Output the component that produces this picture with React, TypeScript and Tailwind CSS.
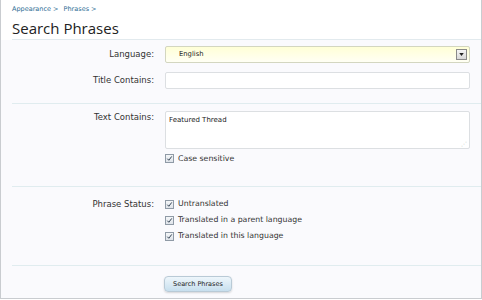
const Check = () => (
    <span className="inline-flex items-center justify-center w-[9px] h-[9px] border border-[#8f9aa6] bg-gradient-to-b from-[#f4f6f8] to-[#dfe4ea] mr-[4px] shrink-0">
        <svg viewBox="0 0 8 8" className="w-[7px] h-[7px]">
            <path d="M1.5 4.2 L3.2 6 L6.6 1.6" fill="none" stroke="#2d3c4e" strokeWidth="1.1" />
        </svg>
    </span>
);

const Row = ({ label, children, className = "" }: { label: string; children: React.ReactNode; className?: string }) => (
    <div className={"flex " + className}>
        <div className="w-[155px] shrink-0 text-right pr-[2px] text-[#333] text-[8.5px]">{label}</div>
        <div className="ml-[9px] w-[305px]">{children}</div>
    </div>
);

const App = () => {
    return (
        <div className="w-[482px] h-[300px] bg-white font-['DejaVu_Sans',sans-serif]">
            <div className="w-[482px] h-[299px] border-l border-r border-b border-[#c9ccd0] bg-[#fafafd]">
                <div className="h-[40px] bg-white">
                    <div className="ml-[11px] h-[40px] pt-[4px] border-b border-[#e2eaee]">
                        <div className="text-[6.5px] text-[#2b6b93] leading-[10px] flex gap-[5px]">
                            <span>Appearance &gt;</span>
                            <span>Phrases &gt;</span>
                        </div>
                        <h1 className="text-[15px] leading-[22px] mt-[3px] text-[#222] font-['Open_Sans',sans-serif]">Search Phrases</h1>
                    </div>
                </div>

                <div className="ml-[11px] border-b border-[#e0ecef] h-[64px] pt-[6px]">
                    <Row label="Language:" className="items-center -ml-[11px]">
                        <div className="h-[17px] border border-[#d3d6c0] rounded-[2px] bg-gradient-to-b from-[#ffffd6] to-[#fffff4] flex items-center justify-between pl-[13px] pr-[2px]">
                            <span className="text-[6.8px] text-[#222]">English</span>
                            <span className="w-[11px] h-[11px] border border-[#8a8a8a] bg-gradient-to-b from-[#f5f5f5] to-[#d8d8d8] flex items-center justify-center">
                                <svg viewBox="0 0 6 4" className="w-[5px] h-[3px]"><path d="M0 0 H6 L3 4 Z" fill="#222" /></svg>
                            </span>
                        </div>
                    </Row>
                    <Row label="Title Contains:" className="items-center mt-[9px] -ml-[11px]">
                        <div className="h-[17px] border border-[#dcdfe2] rounded-[2px] bg-white" />
                    </Row>
                </div>

                <div className="ml-[11px] border-b border-[#e0ecef] h-[83px] pt-[7px]">
                    <Row label="Text Contains:" className="-ml-[11px]">
                        <div className="h-[38px] border border-[#dcdfe2] rounded-[2px] bg-white relative px-[3px] pt-[3px] text-[7px] text-[#222]">
                            Featured Thread
                            <span className="absolute right-[2px] bottom-[1px] text-[6px] text-[#bbb] leading-none">⋰</span>
                        </div>
                        <div className="flex items-center mt-[4px] text-[7.8px] text-[#333]">
                            <Check />Case sensitive
                        </div>
                    </Row>
                </div>

                <div className="ml-[11px] border-b border-[#e0ecef] h-[79px] pt-[11px]">
                    <Row label="Phrase Status:" className="-ml-[11px]">
                        <div className="flex flex-col gap-[4px] text-[7.8px] text-[#333] leading-[12px]">
                            <div className="flex items-center"><Check />Untranslated</div>
                            <div className="flex items-center"><Check />Translated in a parent language</div>
                            <div className="flex items-center"><Check />Translated in this language</div>
                        </div>
                    </Row>
                </div>

                <div className="flex pl-[163px] pt-[10px]">
                    <button className="h-[16px] px-[8px] rounded-[4px] border border-[#b9cad6] bg-gradient-to-b from-[#eef6fb] to-[#c7dfee] text-[6.5px] leading-none text-[#222] shadow-[0_1px_2px_rgba(0,0,0,0.15)]">
                        Search Phrases
                    </button>
                </div>
            </div>
        </div>
    );
};

export default App;
